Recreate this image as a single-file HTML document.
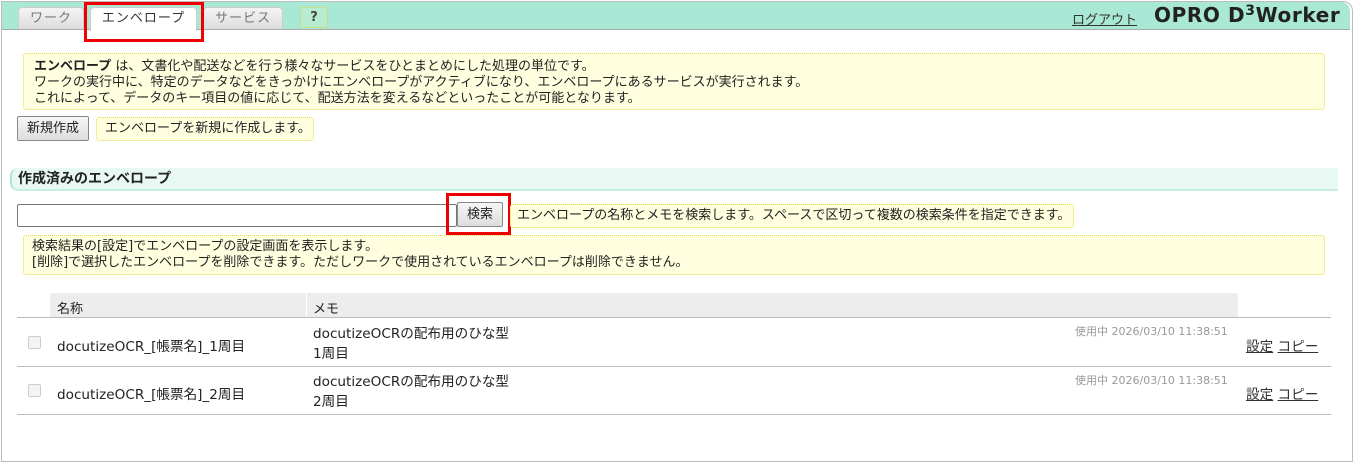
<!DOCTYPE html>
<html><head><meta charset="utf-8"><style>
*{box-sizing:border-box;margin:0;padding:0}
body{width:1355px;height:464px;background:#fff;font-family:"DejaVu Sans","Noto Sans CJK JP",sans-serif;font-size:13px;color:#222;position:relative;overflow:hidden}
.a{position:absolute}
.tab{position:absolute;top:7px;height:22px;background:linear-gradient(#f4f4f4,#ddd);border:1px solid #ccc;border-bottom:none;border-radius:4px 4px 0 0;color:#777;font-size:13px;text-align:center;line-height:21px;letter-spacing:1px}
.note{position:absolute;background:#ffffe0;border:1px dotted #e0d850;border-radius:3px}
.btn{position:absolute;background:linear-gradient(#f6f6f6,#ddd);border:1px solid #888;border-radius:2px;text-align:center;font-size:13px}
.red{position:absolute;border:3px solid #e00}
u{text-decoration:underline}
.r{font-size:13.6px}
</style></head><body>
<div class="a" style="left:1px;top:1px;width:1352px;height:461px;border:1px solid #bbb;border-radius:0 10px 0 0"></div>
<div class="a" style="left:2px;top:2px;width:1348px;height:28px;background:#a8e8d4;border-bottom:1px solid #aaa;border-radius:0 9px 0 0"></div>
<div class="tab" style="left:18px;width:66px">ワーク</div>
<div class="tab" style="left:90px;width:107px;background:#fff;color:#333;height:24px">エンベロープ</div>
<div class="tab" style="left:203px;width:80px">サービス</div>
<div class="a" style="left:300px;top:7px;width:28px;height:21px;border:1px dotted #d8d040;background:#b8ecd0;border-radius:3px;text-align:center;font-weight:bold;line-height:20px;color:#444">?</div>
<div class="red" style="left:84px;top:2px;width:120px;height:40px"></div>
<div class="a" style="left:1072px;top:9px;font-size:13px;color:#333;font-family:'Liberation Sans','Noto Sans CJK JP',sans-serif"><u>ログアウト</u></div>
<div class="a" style="left:1154px;top:3px;font-size:20px;font-weight:bold;color:#222;letter-spacing:0.6px">OPRO D<sup style="font-size:14px;vertical-align:7px">3</sup>Worker</div>

<div class="note" style="left:23px;top:53px;width:1302px;height:57px;padding:5px 0 0 10px;line-height:16px"><b>エンベロープ</b> は、文書化や配送などを行う様々なサービスをひとまとめにした処理の単位です。<br>ワークの実行中に、特定のデータなどをきっかけにエンベロープがアクティブになり、エンベロープにあるサービスが実行されます。<br>これによって、データのキー項目の値に応じて、配送方法を変えるなどといったことが可能となります。</div>
<div class="btn" style="left:17px;top:116px;width:72px;height:25px;line-height:23px">新規作成</div>
<div class="note" style="left:96px;top:117px;width:218px;height:24px;line-height:22px;padding-left:8px">エンベロープを新規に作成します。</div>

<div class="a" style="left:10px;top:168px;width:1328px;height:23px;background:#e8f8f2;border-left:2px solid #b0e4d0;border-bottom:2px solid #c8eedf;border-radius:8px 0 0 8px;font-weight:bold;font-size:14px;line-height:22px;padding-left:6px">作成済みのエンベロープ</div>

<div class="a" style="left:17px;top:204px;width:440px;height:23px;border:1px solid #777;border-radius:2px"></div>
<div class="btn" style="left:457px;top:202px;width:46px;height:25px;line-height:23px">検索</div>
<div class="red" style="left:446px;top:193px;width:65px;height:42px"></div>
<div class="note" style="left:510px;top:204px;width:564px;height:24px;line-height:22px;padding-left:6px">エンベロープの名称とメモを検索します。スペースで区切って複数の検索条件を指定できます。</div>
<div class="note" style="left:23px;top:235px;width:1302px;height:40px;padding:3px 0 0 8px;line-height:16px">検索結果の[設定]でエンベロープの設定画面を表示します。<br>[削除]で選択したエンベロープを削除できます。ただしワークで使用されているエンベロープは削除できません。</div>

<div class="a" style="left:50px;top:293px;width:1188px;height:25px;background:#ededed;border-radius:3px 3px 0 0"></div>
<div class="a" style="left:306px;top:293px;width:1px;height:25px;background:#fff"></div>
<div class="a" style="left:57px;top:298px">名称</div>
<div class="a" style="left:313px;top:298px">メモ</div>
<div class="a" style="left:17px;top:317px;width:1314px;height:1px;background:#bbb"></div>
<div class="a" style="left:17px;top:366px;width:1314px;height:1px;background:#bbb"></div>
<div class="a" style="left:17px;top:414px;width:1314px;height:1px;background:#bbb"></div>

<div class="a" style="left:28px;top:336px;width:13px;height:13px;border:1px solid #ccc;border-radius:2px;background:#f4f4f4"></div>
<div class="a r" style="left:57px;top:335px">docutizeOCR_[帳票名]_1周目</div>
<div class="a r" style="left:313px;top:324px;line-height:20px">docutizeOCRの配布用のひな型<br>1周目</div>
<div class="a" style="left:1075px;top:323px;font-size:11px;color:#999">使用中 2026/03/10 11:38:51</div>
<div class="a r" style="left:1246px;top:335px;color:#333"><u>設定</u> <u>コピー</u></div>

<div class="a" style="left:28px;top:384px;width:13px;height:13px;border:1px solid #ccc;border-radius:2px;background:#f4f4f4"></div>
<div class="a r" style="left:57px;top:383px">docutizeOCR_[帳票名]_2周目</div>
<div class="a r" style="left:313px;top:372px;line-height:20px">docutizeOCRの配布用のひな型<br>2周目</div>
<div class="a" style="left:1075px;top:372px;font-size:11px;color:#999">使用中 2026/03/10 11:38:51</div>
<div class="a r" style="left:1246px;top:383px;color:#333"><u>設定</u> <u>コピー</u></div>
</body></html>
